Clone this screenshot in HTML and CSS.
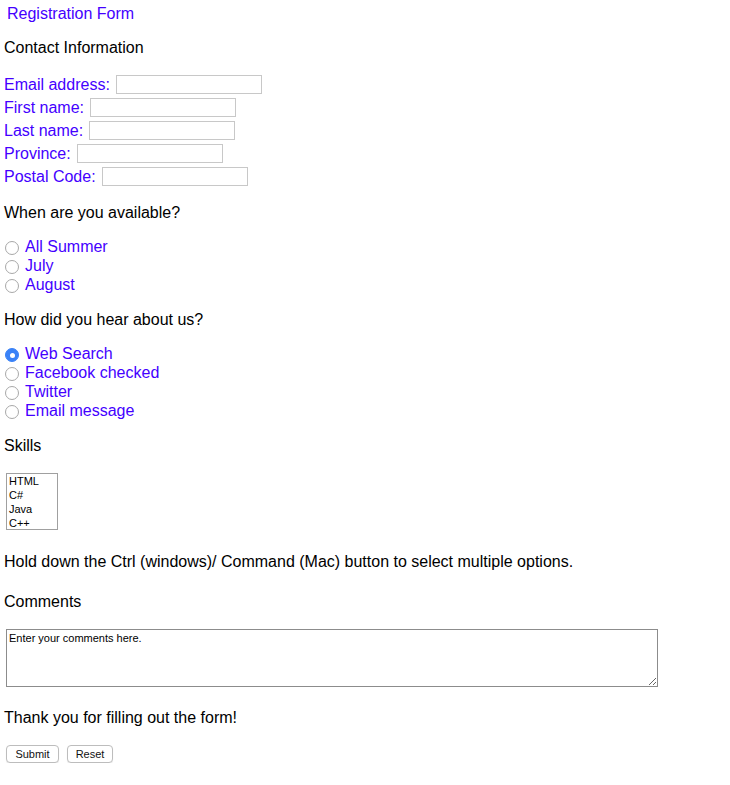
FILE: index.html
```html
<!DOCTYPE html>
<html lang="en">
<head>
<meta charset="utf-8">
<title>Registration Form</title>
<link rel="stylesheet" href="styles.css">
</head>
<body>
<form class="form">
  <div class="title">Registration Form</div>
  <p class="heading">Contact Information</p>
  <div class="fields">
    <div class="field"><label class="lbl" for="email">Email address:</label> <input class="text" id="email" type="text"></div>
    <div class="field"><label class="lbl" for="fname">First name:</label> <input class="text" id="fname" type="text"></div>
    <div class="field"><label class="lbl" for="lname">Last name:</label> <input class="text" id="lname" type="text"></div>
    <div class="field"><label class="lbl" for="prov">Province:</label> <input class="text" id="prov" type="text"></div>
    <div class="field"><label class="lbl" for="postal">Postal Code:</label> <input class="text" id="postal" type="text"></div>
  </div>
  <p class="heading">When are you available?</p>
  <div class="radios">
    <label class="radio"><input type="radio" name="avail"><span class="lbl">All Summer</span></label>
    <label class="radio"><input type="radio" name="avail"><span class="lbl">July</span></label>
    <label class="radio"><input type="radio" name="avail"><span class="lbl">August</span></label>
  </div>
  <p class="heading">How did you hear about us?</p>
  <div class="radios">
    <label class="radio"><input type="radio" name="hear" checked><span class="lbl">Web Search</span></label>
    <label class="radio"><input type="radio" name="hear"><span class="lbl">Facebook checked</span></label>
    <label class="radio"><input type="radio" name="hear"><span class="lbl">Twitter</span></label>
    <label class="radio"><input type="radio" name="hear"><span class="lbl">Email message</span></label>
  </div>
  <p class="heading">Skills</p>
  <div class="listbox" role="listbox" aria-multiselectable="true">
    <div class="opt">HTML</div>
    <div class="opt">C#</div>
    <div class="opt">Java</div>
    <div class="opt">C++</div>
  </div>
  <p class="hint">Hold down the Ctrl (windows)/ Command (Mac) button to select multiple options.</p>
  <p class="heading comments-h">Comments</p>
  <textarea class="comments">Enter your comments here.</textarea>
  <p class="thanks">Thank you for filling out the form!</p>
  <div class="buttons">
    <button class="btn" type="submit">Submit</button>
    <button class="btn" type="reset">Reset</button>
  </div>
</form>
</body>
</html>
```
FILE: styles.css
```css
html, body {
  margin: 0;
  padding: 0;
  background: #ffffff;
}
body {
  font-family: "Liberation Sans", Arial, Helvetica, sans-serif;
  font-size: 16px;
  line-height: 18px;
  color: #000000;
}
.form {
  display: flex;
  flex-direction: column;
  align-items: flex-start;
  padding: 5px 0 0 4px;
}
.title {
  color: #4400ff;
  padding-left: 3px;
}
.heading, .hint, .thanks {
  margin: 16px 0 0 0;
}
.lbl {
  color: #4400ff;
}
.fields {
  display: flex;
  flex-direction: column;
  margin-top: 16px;
}
.field {
  display: flex;
  align-items: center;
  height: 23px;
}
.text {
  box-sizing: border-box;
  width: 146px;
  height: 19px;
  margin: 0 0 0 6px;
  border: 1px solid #c8c8c8;
  background: #fff;
  padding: 0 2px;
  font: 13px "Liberation Sans", Arial, sans-serif;
}
.radios {
  display: flex;
  flex-direction: column;
  margin-top: 16px;
}
.radio {
  display: flex;
  align-items: flex-start;
  height: 19px;
  line-height: 18px;
}
.radio input {
  appearance: none;
  -webkit-appearance: none;
  box-sizing: border-box;
  width: 14px;
  height: 14px;
  margin: 3px 6px 0 1px;
  border: 1px solid #a8a8a8;
  border-radius: 50%;
  background: #fff;
  display: flex;
  align-items: center;
  justify-content: center;
}
.radio input:checked {
  background: #3a82f7;
  border-color: #3a82f7;
}
.radio input:checked::after {
  content: "";
  width: 5px;
  height: 5px;
  border-radius: 50%;
  background: #fff;
}
.listbox {
  box-sizing: border-box;
  width: 52px;
  height: 57px;
  margin: 18px 0 0 2px;
  border: 1px solid #a0a0a0;
  padding: 0 0 0 2px;
  font-size: 11px;
  line-height: 14px;
  overflow: hidden;
}
.hint {
  margin-top: 23px;
}
.comments-h {
  margin-top: 22px;
}
.comments {
  box-sizing: border-box;
  width: 652px;
  height: 58px;
  margin: 18px 0 0 2px;
  border: 1px solid #8c8c8c;
  padding: 2px 2px;
  font: 11px/13px "Liberation Sans", Arial, sans-serif;
  color: #000;
  resize: both;
}
.thanks {
  margin-top: 22px;
}
.buttons {
  display: flex;
  gap: 8px;
  margin: 18px 0 0 2px;
}
.btn {
  box-sizing: border-box;
  height: 18px;
  padding: 0 7px;
  border: 1px solid #bdbdbd;
  border-radius: 4px;
  background: #ffffff;
  box-shadow: 0 1px 1px rgba(0,0,0,0.08);
  font: 11px/16px "Liberation Sans", Arial, sans-serif;
  color: #111;
}
.btn:first-child {
  width: 53px;
}
.btn:last-child {
  width: 46px;
}
```
